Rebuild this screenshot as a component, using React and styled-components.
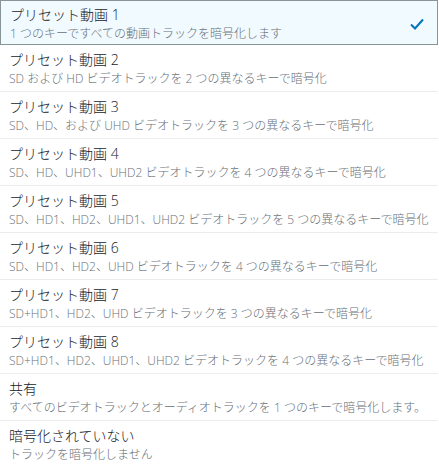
import styled, { createGlobalStyle } from "styled-components";

const GlobalStyle = createGlobalStyle`
  html, body {
    margin: 0;
    padding: 0;
    background: #ffffff;
  }

  body {
    font-family: "Open Sans", "Noto Sans CJK JP", sans-serif;
  }
`;

const Lista = styled.ul`
  list-style: none;
  margin: 0;
  padding: 0;
  width: 439px;
  overflow: hidden;
`;

const Opcao = styled.li`
  display: flex;
  align-items: center;
  box-sizing: border-box;
  height: ${(p) => (p.$selecionado ? "45px" : "47px")};
  padding: 2px 8px 0 9px;
  background: ${(p) => (p.$selecionado ? "#f1faff" : "#ffffff")};
  border: ${(p) => (p.$selecionado ? "1px solid #879596" : "none")};
  border-bottom: 1px solid ${(p) => (p.$selecionado ? "#879596" : "#eaeded")};
  margin-right: 1px;
`;

const OpcaoTexto = styled.div`
  flex: 1;
  display: flex;
  flex-direction: column;
  min-width: 0;
`;

const Titulo = styled.div`
  font-size: 14px;
  font-weight: 300;
  line-height: 20px;
  color: #16191f;
  white-space: nowrap;
`;

const Descricao = styled.div`
  font-size: 12px;
  font-weight: 300;
  line-height: 18px;
  color: #687078;
  white-space: nowrap;
`;

const Marca = styled.svg`
  flex: none;
  width: 16px;
  height: 16px;
  margin-right: 4px;
`;

const opcoes = [
  { titulo: "プリセット動画 1", descricao: "1 つのキーですべての動画トラックを暗号化します" },
  { titulo: "プリセット動画 2", descricao: "SD および HD ビデオトラックを 2 つの異なるキーで暗号化" },
  { titulo: "プリセット動画 3", descricao: "SD、HD、および UHD ビデオトラックを 3 つの異なるキーで暗号化" },
  { titulo: "プリセット動画 4", descricao: "SD、HD、UHD1、UHD2 ビデオトラックを 4 つの異なるキーで暗号化" },
  { titulo: "プリセット動画 5", descricao: "SD、HD1、HD2、UHD1、UHD2 ビデオトラックを 5 つの異なるキーで暗号化" },
  { titulo: "プリセット動画 6", descricao: "SD、HD1、HD2、UHD ビデオトラックを 4 つの異なるキーで暗号化" },
  { titulo: "プリセット動画 7", descricao: "SD+HD1、HD2、UHD ビデオトラックを 3 つの異なるキーで暗号化" },
  { titulo: "プリセット動画 8", descricao: "SD+HD1、HD2、UHD1、UHD2 ビデオトラックを 4 つの異なるキーで暗号化" },
  { titulo: "共有", descricao: "すべてのビデオトラックとオーディオトラックを 1 つのキーで暗号化します。" },
  { titulo: "暗号化されていない", descricao: "トラックを暗号化しません" },
];

export default function App() {
  return (
    <>
      <GlobalStyle />
      <Lista>
        {opcoes.map((o, i) => (
          <Opcao key={o.titulo} $selecionado={i === 0}>
            <OpcaoTexto>
              <Titulo>{o.titulo}</Titulo>
              <Descricao>{o.descricao}</Descricao>
            </OpcaoTexto>
            {i === 0 && (
              <Marca viewBox="0 0 16 16">
                <path
                  d="M2 8.5 L6 12.5 L14 3.5"
                  fill="none"
                  stroke="#0073bb"
                  strokeWidth="2"
                />
              </Marca>
            )}
          </Opcao>
        ))}
      </Lista>
    </>
  );
}
